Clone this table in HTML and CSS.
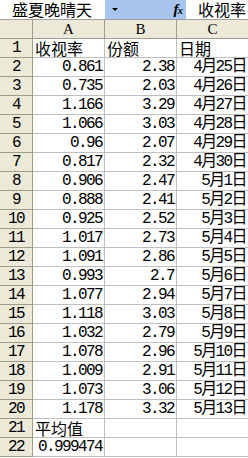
FILE: index.html
```html
<!DOCTYPE html>
<html lang="zh">
<head>
<meta charset="utf-8">
<title>盛夏晚晴天</title>
<link rel="stylesheet" href="styles.css">
</head>
<body>
<div class="fbar">
  <div class="namebox">盛夏晚晴天</div>
  <div class="fbtn">
    <span class="arrow"></span>
    <span class="fx">f<span class="fx-x">x</span></span>
  </div>
  <div class="formula">收视率</div>
</div>
<div class="sheet">
  <div class="c h corner"></div><div class="c h col">A</div><div class="c h col">B</div><div class="c h col">C</div>

  <div class="c h row">1</div><div class="c t">收视率</div><div class="c t">份额</div><div class="c t">日期</div>
  <div class="c h row">2</div><div class="c n">0.861</div><div class="c n">2.38</div><div class="c n">4月25日</div>
  <div class="c h row">3</div><div class="c n">0.735</div><div class="c n">2.03</div><div class="c n">4月26日</div>
  <div class="c h row">4</div><div class="c n">1.166</div><div class="c n">3.29</div><div class="c n">4月27日</div>
  <div class="c h row">5</div><div class="c n">1.066</div><div class="c n">3.03</div><div class="c n">4月28日</div>
  <div class="c h row">6</div><div class="c n">0.96</div><div class="c n">2.07</div><div class="c n">4月29日</div>
  <div class="c h row">7</div><div class="c n">0.817</div><div class="c n">2.32</div><div class="c n">4月30日</div>
  <div class="c h row">8</div><div class="c n">0.906</div><div class="c n">2.47</div><div class="c n">5月1日</div>
  <div class="c h row">9</div><div class="c n">0.888</div><div class="c n">2.41</div><div class="c n">5月2日</div>
  <div class="c h row">10</div><div class="c n">0.925</div><div class="c n">2.52</div><div class="c n">5月3日</div>
  <div class="c h row">11</div><div class="c n">1.017</div><div class="c n">2.73</div><div class="c n">5月4日</div>
  <div class="c h row">12</div><div class="c n">1.091</div><div class="c n">2.86</div><div class="c n">5月5日</div>
  <div class="c h row">13</div><div class="c n">0.993</div><div class="c n">2.7</div><div class="c n">5月6日</div>
  <div class="c h row">14</div><div class="c n">1.077</div><div class="c n">2.94</div><div class="c n">5月7日</div>
  <div class="c h row">15</div><div class="c n">1.118</div><div class="c n">3.03</div><div class="c n">5月8日</div>
  <div class="c h row">16</div><div class="c n">1.032</div><div class="c n">2.79</div><div class="c n">5月9日</div>
  <div class="c h row">17</div><div class="c n">1.078</div><div class="c n">2.96</div><div class="c n">5月10日</div>
  <div class="c h row">18</div><div class="c n">1.009</div><div class="c n">2.91</div><div class="c n">5月11日</div>
  <div class="c h row">19</div><div class="c n">1.073</div><div class="c n">3.06</div><div class="c n">5月12日</div>
  <div class="c h row">20</div><div class="c n">1.178</div><div class="c n">3.32</div><div class="c n">5月13日</div>
  <div class="c h row">21</div><div class="c t">平均值</div><div class="c"></div><div class="c"></div>
  <div class="c h row">22</div><div class="c n">0.999474</div><div class="c"></div><div class="c"></div>
</div>
</body>
</html>
```
FILE: styles.css
```css
html, body {
  margin: 0;
  padding: 0;
}
body {
  width: 248px;
  height: 458px;
  overflow: hidden;
  background: #ffffff;
  color: #000000;
  font-family: "Noto Sans CJK SC", sans-serif;
}
.fbar {
  display: flex;
  height: 19px;
  white-space: nowrap;
}
.namebox {
  width: 105px;
  flex: none;
  box-sizing: border-box;
  padding-left: 12px;
  font-size: 16px;
  line-height: 19px;
}
.fbtn {
  width: 81px;
  flex: none;
  box-sizing: border-box;
  background: #a9c5ef;
  display: flex;
  align-items: center;
  justify-content: space-between;
  padding: 0 4px 0 7px;
}
.arrow {
  width: 0;
  height: 0;
  border-left: 3px solid transparent;
  border-right: 3px solid transparent;
  border-top: 3px solid #000000;
}
.fx {
  font-family: "Liberation Serif", serif;
  font-style: italic;
  font-weight: bold;
  font-size: 15px;
  line-height: 19px;
  letter-spacing: -1px;
}
.fx-x {
  font-size: 11px;
}
.formula {
  padding-left: 12px;
  font-size: 16px;
  line-height: 19px;
}
.sheet {
  display: grid;
  grid-template-columns: 33px 72px 72px 72px;
  grid-auto-rows: 19px;
  border-top: 1px solid #a0a0a0;
  width: 249px;
}
.c {
  box-sizing: border-box;
  border-right: 1px solid #c0c0c0;
  border-bottom: 1px solid #c0c0c0;
  font-size: 16px;
  line-height: 18px;
  white-space: nowrap;
  padding: 0 3px;
}
.h {
  background: #ece9d8;
  border-color: #9d9d8a;
  text-align: center;
  padding: 0;
}
.col {
  font-family: "Liberation Serif", serif;
  font-size: 15px;
}
.row {
  font-family: "Liberation Mono", monospace;
  letter-spacing: -1.6px;
}
.n {
  font-family: "Liberation Mono", "Noto Sans CJK SC", monospace;
  letter-spacing: -1.6px;
  text-align: right;
  padding-right: 2px;
}
.t {
  text-align: left;
  padding-left: 2px;
}
```
